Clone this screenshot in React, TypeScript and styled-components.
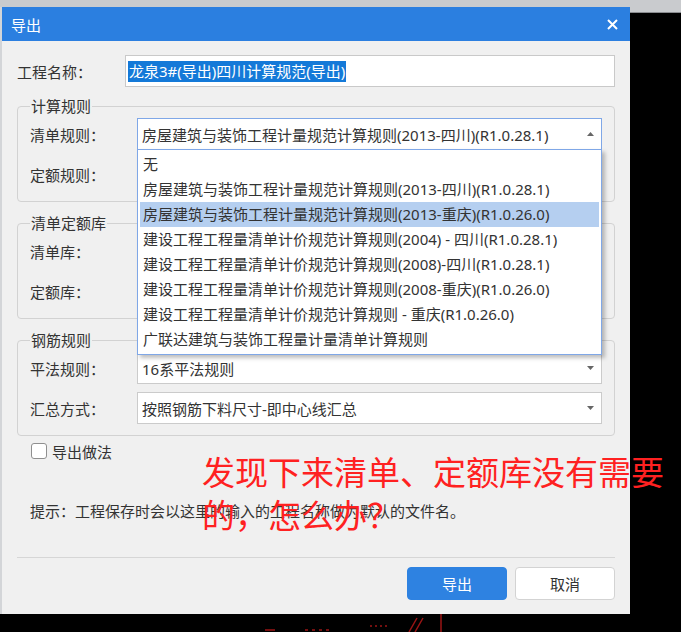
import React from 'react';
import styled, { createGlobalStyle } from 'styled-components';

const GlobalStyle = createGlobalStyle`
  html, body {
    margin: 0;
    padding: 0;
    background: #000;
  }
  body {
    font-family: "Noto Sans", "Noto Sans CJK SC", sans-serif;
  }
`;

const Desktop = styled.div`
  position: relative;
  width: 681px;
  height: 632px;
  overflow: hidden;
  background: #000;
`;

const TopStrip = styled.div`
  height: 12px;
  background: #c9cbce;
  border-bottom: 1px solid #8a8c90;
`;

const Window = styled.div`
  position: absolute;
  left: 0;
  top: 7px;
  width: 628px;
  border-left: 2px solid #d3d5d8;
  display: flex;
  flex-direction: column;
  background: #f0f0f0;
`;

const TitleBar = styled.div`
  height: 34px;
  display: flex;
  align-items: center;
  justify-content: space-between;
  padding: 0 12px 0 9px;
  background: #2b7fe0;
  color: #fff;
  font-size: 15px;
`;

const Body = styled.div`
  padding: 14px 15px 14px 15px;
  display: flex;
  flex-direction: column;
  color: #333;
  font-size: 15px;
`;

const Row = styled.div`
  display: flex;
  align-items: center;
  height: 32px;
`;

const Label = styled.div<{ $width: number }>`
  width: ${(p) => p.$width}px;
  flex-shrink: 0;
  white-space: nowrap;
`;

const TextField = styled.div`
  flex: 1;
  height: 32px;
  box-sizing: border-box;
  border: 1px solid #c9c9c9;
  background: #fff;
  display: flex;
  align-items: center;
  padding-left: 2px;
  white-space: nowrap;
`;

const Selected = styled.span`
  background: #1479d8;
  color: #fff;
  line-height: 21px;
  padding: 0 1px;
`;

const Group = styled.fieldset<{ $first?: boolean }>`
  margin: ${(p) => (p.$first ? 9 : 11)}px 0 0;
  padding: 2px 12px 11px;
  border: 1px solid #d2d2d2;
  border-radius: 4px;
  min-width: 0;
`;

const Legend = styled.legend`
  padding: 0 1px;
  line-height: 20px;
  font-size: 15px;
  color: #333;
`;

const Rows = styled.div`
  display: flex;
  flex-direction: column;
  gap: 8px;
`;

const SelectBox = styled.div<{ $focused?: boolean }>`
  position: relative;
  flex: 1;
  min-width: 0;
  height: 32px;
  box-sizing: border-box;
  border: 1px solid ${(p) => (p.$focused ? '#7fa7e7' : '#cbcbcb')};
  background: #fff;
  display: flex;
  align-items: center;
  padding: 0 7px 0 4px;
`;

const SelectText = styled.span`
  flex: 1;
  white-space: nowrap;
  overflow: hidden;
`;

const Dropdown = styled.div`
  position: absolute;
  top: 100%;
  left: -1px;
  right: -1px;
  box-sizing: border-box;
  border: 1px solid #7fa7e7;
  background: #fff;
  padding: 2px;
  box-shadow: 3px 3px 4px rgba(0, 0, 0, 0.25);
  z-index: 10;
`;

const Option = styled.div<{ $active?: boolean }>`
  height: 25px;
  line-height: 25px;
  padding-left: 3px;
  white-space: nowrap;
  background: ${(p) => (p.$active ? '#b5cff0' : 'transparent')};
`;

const CheckRow = styled.label`
  display: flex;
  align-items: center;
  height: 20px;
  margin-top: 5px;
  padding-left: 14px;
`;

const CheckBox = styled.span`
  width: 14px;
  height: 14px;
  border: 1px solid #8f8f8f;
  border-radius: 3px;
  background: #fff;
  margin-right: 5px;
`;

const Tip = styled.div`
  margin-top: 40px;
  padding-left: 13px;
  line-height: 20px;
  white-space: nowrap;
`;

const Separator = styled.div`
  margin-top: 36px;
  height: 1px;
  background: #d6d6d6;
`;

const Footer = styled.div`
  margin-top: 9px;
  display: flex;
  justify-content: flex-end;
  gap: 8px;
`;

const Button = styled.button<{ $primary?: boolean }>`
  width: 100px;
  height: 33px;
  border-radius: 4px;
  font-family: inherit;
  font-size: 15px;
  cursor: pointer;
  background: ${(p) => (p.$primary ? '#2e82e1' : '#fff')};
  color: ${(p) => (p.$primary ? '#fff' : '#333')};
  border: 1px solid ${(p) => (p.$primary ? '#2e82e1' : '#d3d3d3')};
`;

const Annotation = styled.div`
  position: absolute;
  left: 202px;
  top: 450px;
  color: #ff2121;
  font-family: "Noto Sans CJK SC", sans-serif;
  font-size: 33px;
  line-height: 43px;
  white-space: nowrap;
  z-index: 20;
`;

const Scribble = styled.svg`
  position: absolute;
  left: 255px;
  top: 612px;
`;

const Caret = ({ up }: { up?: boolean }) => (
  <svg width="7" height="4" viewBox="0 0 7 4">
    <path d={up ? 'M0 4 L3.5 0 L7 4 Z' : 'M0 0 L3.5 4 L7 0 Z'} fill="#666" />
  </svg>
);

const CloseIcon = () => (
  <svg width="11" height="11" viewBox="0 0 11 11">
    <path d="M1 1 L10 10 M10 1 L1 10" stroke="#fff" strokeWidth="2" />
  </svg>
);

const options = [
  '无',
  '房屋建筑与装饰工程计量规范计算规则(2013-四川)(R1.0.28.1)',
  '房屋建筑与装饰工程计量规范计算规则(2013-重庆)(R1.0.26.0)',
  '建设工程工程量清单计价规范计算规则(2004) - 四川(R1.0.28.1)',
  '建设工程工程量清单计价规范计算规则(2008)-四川(R1.0.28.1)',
  '建设工程工程量清单计价规范计算规则(2008-重庆)(R1.0.26.0)',
  '建设工程工程量清单计价规范计算规则 - 重庆(R1.0.26.0)',
  '广联达建筑与装饰工程量计量清单计算规则',
];

const App = () => {
  return (
    <Desktop>
      <GlobalStyle />
      <TopStrip />
      <Window>
        <TitleBar>
          <span>导出</span>
          <CloseIcon />
        </TitleBar>
        <Body>
          <Row>
            <Label $width={108}>工程名称：</Label>
            <TextField>
              <Selected>龙泉3#(导出)四川计算规范(导出)</Selected>
            </TextField>
          </Row>

          <Group $first>
            <Legend>计算规则</Legend>
            <Rows>
              <Row>
                <Label $width={107}>清单规则：</Label>
                <SelectBox $focused>
                  <SelectText>{options[1]}</SelectText>
                  <Caret up />
                  <Dropdown>
                    {options.map((o, i) => (
                      <Option key={o} $active={i === 2}>
                        {o}
                      </Option>
                    ))}
                  </Dropdown>
                </SelectBox>
              </Row>
              <Row>
                <Label $width={107}>定额规则：</Label>
                <SelectBox>
                  <SelectText />
                  <Caret />
                </SelectBox>
              </Row>
            </Rows>
          </Group>

          <Group>
            <Legend>清单定额库</Legend>
            <Rows>
              <Row>
                <Label $width={107}>清单库：</Label>
                <SelectBox>
                  <SelectText />
                  <Caret />
                </SelectBox>
              </Row>
              <Row>
                <Label $width={107}>定额库：</Label>
                <SelectBox>
                  <SelectText />
                  <Caret />
                </SelectBox>
              </Row>
            </Rows>
          </Group>

          <Group>
            <Legend>钢筋规则</Legend>
            <Rows>
              <Row>
                <Label $width={107}>平法规则：</Label>
                <SelectBox>
                  <SelectText>16系平法规则</SelectText>
                  <Caret />
                </SelectBox>
              </Row>
              <Row>
                <Label $width={107}>汇总方式：</Label>
                <SelectBox>
                  <SelectText>按照钢筋下料尺寸-即中心线汇总</SelectText>
                  <Caret />
                </SelectBox>
              </Row>
            </Rows>
          </Group>

          <CheckRow>
            <CheckBox />
            导出做法
          </CheckRow>
          <Tip>提示：工程保存时会以这里的输入的工程名称做为默认的文件名。</Tip>
          <Separator />
          <Footer>
            <Button $primary>导出</Button>
            <Button>取消</Button>
          </Footer>
        </Body>
      </Window>

      <Annotation>
        发现下来清单、定额库没有需要
        <br />
        的，怎么办？
      </Annotation>

      <Scribble width="200" height="20" viewBox="0 0 200 20">
        <g stroke="#9a1414" strokeWidth="1.5" fill="none">
          <path d="M10 18 L20 18" />
          <path d="M50 18 L53 18 M57 18 L60 18 M64 18 L67 18 M71 18 L74 18" />
          <path d="M115 14 L117 14 M120 14 L122 14 M125 14 L127 14 M130 14 L132 14" />
          <path d="M154 20 L162 6 M160 20 L168 6" />
          <path d="M186 2 L186 20" />
        </g>
      </Scribble>
    </Desktop>
  );
};

export default App;
